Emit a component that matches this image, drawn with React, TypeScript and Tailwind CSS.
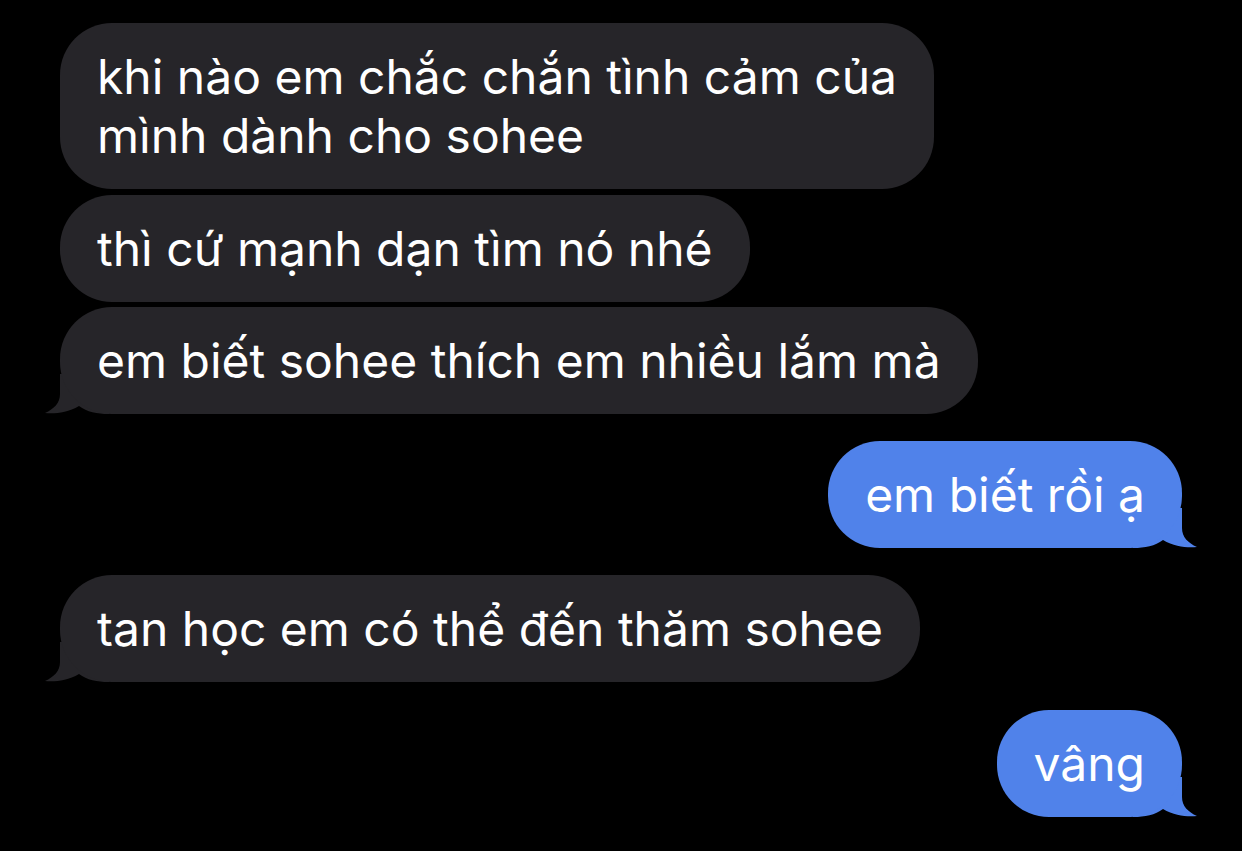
import React from 'react';

type Msg = { from: 'them' | 'me'; lines: string[]; tail?: boolean; gap: string };

const messages: Msg[] = [
  { from: 'them', lines: ['khi nào em chắc chắn tình cảm của', 'mình dành cho sohee'], gap: 'mt-0' },
  { from: 'them', lines: ['thì cứ mạnh dạn tìm nó nhé'], gap: 'mt-[6px]' },
  { from: 'them', lines: ['em biết sohee thích em nhiều lắm mà'], tail: true, gap: 'mt-[5px]' },
  { from: 'me', lines: ['em biết rồi ạ'], tail: true, gap: 'mt-[27px]' },
  { from: 'them', lines: ['tan học em có thể đến thăm sohee'], tail: true, gap: 'mt-[27px]' },
  { from: 'me', lines: ['vâng'], tail: true, gap: 'mt-[28px]' },
];

const Tail: React.FC<{ side: 'left' | 'right'; color: string }> = ({ side, color }) => (
  <svg
    width="64"
    height="40"
    viewBox="0 0 64 40"
    className={
      side === 'left'
        ? 'absolute bottom-0 left-[-15px]'
        : 'absolute bottom-0 right-[-15px] -scale-x-100'
    }
  >
    <path d="M15 0 L15 20 C15 29 9 35 0 39 C9 40 22 39 34 32 C42 38 52 40 64 40 L64 0 Z" fill={color} />
  </svg>
);

const Bubble: React.FC<{ msg: Msg }> = ({ msg }) => {
  const mine = msg.from === 'me';
  const color = mine ? '#5082ea' : '#262529';
  return (
    <div className={`flex ${mine ? 'justify-end' : 'justify-start'} ${msg.gap}`}>
      <div className="relative">
        {msg.tail && <Tail side={mine ? 'right' : 'left'} color={color} />}
        <div
          className={`relative rounded-[52px] px-[37px] py-[24px] text-[48px] leading-[59px] text-white ${
            mine ? 'bg-[#5082ea]' : 'bg-[#262529]'
          }`}
        >
          {msg.lines.map((l, i) => (
            <div key={i} className="whitespace-nowrap">
              {l}
            </div>
          ))}
        </div>
      </div>
    </div>
  );
};

export default function App() {
  return (
    <div
      className="min-h-[851px] w-full bg-black px-[60px] pt-[23px] antialiased"
      style={{ fontFamily: 'Inter, "Noto Sans", sans-serif' }}
    >
      {messages.map((m, i) => (
        <Bubble key={i} msg={m} />
      ))}
    </div>
  );
}
